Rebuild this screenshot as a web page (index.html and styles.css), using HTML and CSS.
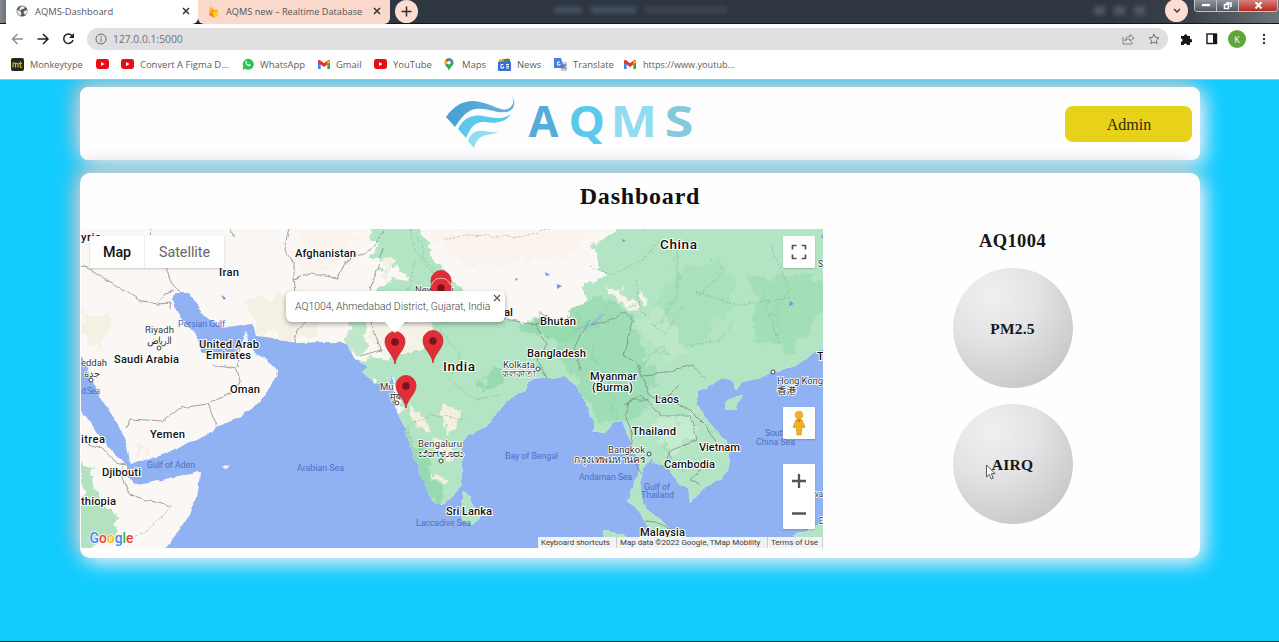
FILE: index.html
```html
<!DOCTYPE html>
<html lang="en">
<head>
<meta charset="utf-8">
<title>AQMS-Dashboard</title>
<link rel="stylesheet" href="styles.css">
</head>
<body>
<svg class="defs" width="0" height="0">
  <symbol id="yt" viewBox="0 0 13 10"><rect width="13" height="10" rx="2.4" fill="#e50d16"/><path d="M5 3v4l3.6-2z" fill="#fff"/></symbol>
  <symbol id="gm" viewBox="0 0 12 9"><path d="M0 1.2V9h2.7V3.6z" fill="#4285f4"/><path d="M12 1.2V9H9.3V3.6z" fill="#34a853"/><path d="M0 1.2C.3-.2 1.6-.1 2.4.5L6 3.3 9.6.5c.8-.6 2.1-.7 2.4.7v1.3L6 7 0 2.500z" fill="#ea3223"/><path d="M9.300 1L12 .8V2.500L9.300 4.500z" fill="#fbbc04"/></symbol>
  <symbol id="pin" viewBox="0 0 22 34"><path d="M11 33C10 24 1 19 1 10.500a10 10 0 0 1 20 0C21 19 12 24 11 33z" fill="#df2e36" stroke="#c9242d" stroke-width=".8"/><circle cx="11" cy="11" r="3.800" fill="#79141a" stroke="none"/></symbol>
  <symbol id="x" viewBox="0 0 8 8"><path d="M1 1l6 6M7 1L1 7" stroke="#333" stroke-width="1.500"/></symbol>
</svg>

<header class="tabstrip">
  <div class="tab tab-active">
    <svg width="12" height="12" viewBox="0 0 12 12"><circle cx="6" cy="6" r="5.500" fill="#55585c"/><path d="M1 5l3 1 1.500 2-1 3C2 10 1 8 1 5zM6 1l3 1-1 2-2 0-1 1.500-2-.5 1-2.500zM8 6l3-1c.5 2-.5 4-2 5L7.500 8z" fill="#e8e8e8"/></svg>
    <span class="tab-title t1">AQMS-Dashboard</span>
    <svg class="close" width="8" height="8"><use href="#x"/></svg>
  </div>
  <div class="tab tab-pink">
    <svg width="11" height="13" viewBox="0 0 11 13"><path d="M1 10L2 1l2 3 1-2 1 3 3-1 1.500 6L6 13z" fill="#fbb01c"/><path d="M1 10l4-5 2 8z" fill="#f58a13"/><path d="M4.500 7l6 0-.5 4-4 2z" fill="#fdcf3a"/></svg>
    <span class="tab-title t2">AQMS new – Realtime Database</span>
    <svg class="close" width="8" height="8"><use href="#x"/></svg>
  </div>
  <div class="round plus"><svg width="11" height="11"><path d="M5.500 .5v10M.5 5.500h10" stroke="#3b2a28" stroke-width="1.500"/></svg></div>
  <div class="ghost"><i></i><i></i><i></i></div>
  <div class="ghost-marks"><i></i><i></i><i></i></div>
  <div class="round chevron"><svg width="8" height="6"><path d="M1 1l3 3 3-3" fill="none" stroke="#43302c" stroke-width="1.300"/></svg></div>
  <div class="winbtns">
    <span><svg width="10" height="5"><rect x=".5" y=".5" width="9" height="3" fill="#fff" stroke="#555" stroke-width=".5"/></svg></span>
    <span><svg width="9" height="8"><path d="M3 1h5v4M1.500 2.500h4v4h-4z" fill="none" stroke="#fff" stroke-width="1.600"/></svg></span>
    <span class="red"><svg width="9" height="7"><path d="M1.500 0l6 6.500M7.500 0l-6 6.500" stroke="#fff" stroke-width="2"/></svg></span>
  </div>
</header>

<nav class="toolbar">
  <svg width="76" height="22" viewBox="0 0 76 22" fill="none">
    <path d="M16 11H6m4.500-5L5.500 11l5 5" stroke="#8a8a8a" stroke-width="1.300"/>
    <path d="M30.500 11h10M36 6l5 5-5 5" stroke="#222" stroke-width="1.500"/>
    <path d="M65.300 8A4.700 4.700 0 1 0 66 12" stroke="#222" stroke-width="1.500"/><path d="M67 5v5h-5z" fill="#222"/>
  </svg>
  <div class="address">
    <svg width="12" height="12" fill="none" stroke="#666"><circle cx="6" cy="6" r="5"/><path d="M6 5.300v3.500M6 3v1.300"/></svg>
    <span class="url">127.0.0.1:5000</span>
    <svg class="share" width="13" height="12" fill="none" stroke="#808083"><path d="M1 4v7h9V9M3 8c0-3 2-4.500 5-4.500V1.500L12 5 8 8.300V6C6 6 4 6.500 3 8z"/></svg>
    <svg width="12" height="12" viewBox="0 0 12 12" fill="none" stroke="#707073"><path d="M6 1l1.500 3.400 3.500.4-2.600 2.400.7 3.600L6 9l-3.100 1.800.7-3.600L1 4.800l3.500-.4z"/></svg>
  </div>
  <svg class="puzzle" width="12" height="12"><path d="M1 3h3a1.700 1.700 0 1 1 3.400 0H10v3a1.700 1.700 0 1 1 0 3.300V12H7a1.600 1.600 0 0 0-3.200 0H1V8.800a1.600 1.600 0 0 0 0-3.200z" fill="#161616"/></svg>
  <svg width="12" height="12"><rect x="1" y="1" width="9.500" height="9.500" fill="none" stroke="#161616" stroke-width="1.400"/><path d="M7 1h4v10H7z" fill="#161616"/></svg>
  <div class="avatar">K</div>
  <svg width="4" height="12" fill="#333"><circle cx="2" cy="2" r="1.200"/><circle cx="2" cy="6" r="1.200"/><circle cx="2" cy="10" r="1.200"/></svg>
</nav>

<nav class="bookmarks">
  <a class="bm b1"><svg width="13" height="13"><rect width="13" height="13" rx="2" fill="#26251f"/><path d="M2 9.500V5.500q1.300-1.500 2.500 0v4M4.500 6q1.300-1.500 2.500 0v3.500M9.300 3.500v5q.3 1 1.700 1M7.800 5.500H11" fill="none" stroke="#d8b82c" stroke-width="1.200"/></svg><span>Monkeytype</span></a>
  <a class="bm b2"><svg width="13" height="10"><use href="#yt"/></svg></a>
  <a class="bm b3"><svg width="13" height="10"><use href="#yt"/></svg><span>Convert A Figma D...</span></a>
  <a class="bm b4"><svg width="12" height="12"><path d="M.5 11.500l.8-3A5.500 5.500 0 1 1 3.500 11z" fill="#2cc64e"/><path d="M3.500 3.200q1-1 1.500.7l-.5.9q.8 1.500 2 1.800l.8-.7 1.500.8q-.3 1.900-2.200 1.500Q3.300 7 3.500 3.200z" fill="#fff"/></svg><span>WhatsApp</span></a>
  <a class="bm b5"><svg width="12" height="9"><use href="#gm"/></svg><span>Gmail</span></a>
  <a class="bm b6"><svg width="13" height="10"><use href="#yt"/></svg><span>YouTube</span></a>
  <a class="bm b7"><svg width="10" height="13" viewBox="0 0 10 13"><path d="M5 13C4.500 9.500.5 8 .5 4.800A4.500 4.500 0 0 1 9.500 4.800C9.500 8 5.500 9.500 5 13z" fill="#34a853"/><path d="M1.300 7A4.600 4.600 0 0 1 1.500 2L5 4.800z" fill="#fbbc04"/><path d="M1.500 2.200A4.500 4.500 0 0 1 4.500.3L5 4.800z" fill="#ea4335"/><path d="M4.500.3a4.500 4.500 0 0 1 4.500 2.500L5 4.800z" fill="#4285f4"/><circle cx="5" cy="4.700" r="1.700" fill="#fff"/></svg><span>Maps</span></a>
  <a class="bm b8"><svg width="13" height="13"><path d="M1 3l9-3 2 4z" fill="#e9a33a"/><path d="M4 1h8v3H4z" fill="#3d8f58"/><path d="M1 1.500h5v2H1z" fill="#e9a33a"/><rect y="3.500" width="13" height="9.500" rx="1" fill="#3c6ddb"/><path d="M5.500 6.500H3v3.500h2.500V8.500M8 6.500h3M8 8.300h3M8 10h3" stroke="#fff" fill="none"/></svg><span>News</span></a>
  <a class="bm b9"><svg width="13" height="13"><path d="M5 4h8v9H7z" fill="#c9ccd2"/><path d="M0 0h7l3 10H0z" fill="#477fe6"/><path d="M6 4H3.500v3H6V5.700" stroke="#fff" fill="none"/><path d="M8.500 7h4M10.500 6v1q0 2-2 4M9.500 8l2.500 3" stroke="#68748a" fill="none"/></svg><span>Translate</span></a>
  <a class="bm b10"><svg width="12" height="9"><use href="#gm"/></svg><span>https://www.youtub...</span></a>
</nav>

<main class="page">
  <section class="card topbar">
    <svg class="logo" width="250" height="56" viewBox="445 93 250 56">
      <defs><linearGradient id="lg" x1="0" x2="1"><stop offset="0" stop-color="#469fd4"/><stop offset="1" stop-color="#69b4dc"/></linearGradient></defs>
      <path d="M446 117C456 103 468 99 480 102 494 105 503 113 510 107.500 514 104 514 100 512 96 516 102 515 110 507 112 497 114 487 107 475 109 465 111 460 120 455 127z" fill="url(#lg)"/>
      <path d="M458 129C463 119 471 114 483 116 494 118 503 120 511 114 506 122 496 124 485 122 475 121 470 128 466 138z" fill="#5bc8ec"/>
      <path d="M468 141C471 132 477 130 485 131 491 132 495 133 499 131 494 135 488 134 483 136 478 138 475 143 474 148z" fill="#92dcf0"/>
      <g class="word"><text x="528.500" y="136.500" textLength="30" lengthAdjust="spacingAndGlyphs" fill="#55acd9">A</text><text x="568.500" y="136.500" textLength="36.500" lengthAdjust="spacingAndGlyphs" fill="#5bc8ec">Q</text><text x="610.500" y="136.500" textLength="46.500" lengthAdjust="spacingAndGlyphs" fill="#92dcf0">M</text><text x="664.500" y="136.500" textLength="29" lengthAdjust="spacingAndGlyphs" fill="#86c9d8">S</text></g>
    </svg>
    <button class="admin">Admin</button>
  </section>

  <section class="card board">
    <h1>Dashboard</h1>
    <div class="cols">
      <div class="mapbox">
        <svg class="map" width="742" height="319" viewBox="81 229 742 319">
          <defs>
            <filter id="rough" filterUnits="userSpaceOnUse" x="61" y="209" width="790" height="360"><feTurbulence type="fractalNoise" baseFrequency=".1" numOctaves="2" seed="4"/><feDisplacementMap in="SourceGraphic" scale="5" xChannelSelector="R" yChannelSelector="G"/><feGaussianBlur stdDeviation=".35"/></filter>
            <filter id="rough2" filterUnits="userSpaceOnUse" x="61" y="209" width="790" height="360"><feTurbulence type="fractalNoise" baseFrequency=".06" numOctaves="4" seed="9"/><feDisplacementMap in="SourceGraphic" scale="24" xChannelSelector="R" yChannelSelector="G"/><feGaussianBlur stdDeviation=".5"/></filter>
            <path id="land" d="M70 219H835V340L812 355 795 366 775 372 762 378 742 382 736 390 731 380 722 378 708 387 698 392 697 403 703 415 715 428 725 440 730 452 729 468 720 480 707 485 690 502 688 488 678 483 672 473 665 465 653 463 652 458 645 467 640 482 642 498 647 510 658 517 668 527 675 538 680 550 658 550 653 532 643 518 635 508 628 503 630 492 637 478 640 465 635 452 628 435 623 422 615 422 605 433 593 433 593 422 588 408 582 395 575 385 565 377 553 378 540 378 528 382 525 390 512 397 502 408 485 427 468 435 463 442 463 468 460 487 452 497 442 506 433 502 425 485 417 465 410 445 405 428 397 412 395 398 393 378 397 370 387 385 375 383 362 372 368 367 355 358 345 343 325 342 297 343 267 338 255 337 252 323 240 325 223 328 210 320 198 308 190 293 175 293 172 298 180 317 190 328 197 338 202 352 213 358 227 358 240 348 247 330 248 343 257 355 272 363 278 370 277 378 268 390 260 403 240 417 217 427 208 435 190 443 167 453 147 460 130 463 128 450 123 435 113 415 100 398 93 380 86 366 81 356 70 350zM70 402L82 411 90 422 100 437 113 452 127 465 127 475 135 485 150 483 173 477 195 472 200 472 198 492 190 515 177 533 163 552H70zM463 492L470 497 477 510 480 518 472 525 462 520 461 505zM743 395L735 410 725 410 725 402 733 397zM783 540L802 532 818 526 835 510V560H785zM602 530L625 535 630 560H612zM221 464L230 465 226 468z"/>
            <clipPath id="lc"><use href="#land"/></clipPath>
          </defs>
          <rect x="70" y="219" width="760" height="340" fill="#90b2f3"/>
          <g filter="url(#rough)">
            <use href="#land" fill="#faf7f4"/>
            <g clip-path="url(#lc)">
              <g filter="url(#rough2)">
                <path d="M392 215H412L430 250 446 272 475 298 515 322 555 320 590 318 585 285 600 275 592 250 625 222H850V580H590V480L460 550H420L397 415 393 380 380 391 358 376 356 360 380 358 392 362 412 345 400 330 375 312 378 290 405 272 375 262 370 232z" fill="#b3e5c4"/>
                <path d="M352 300L363 318 368 348 350 352 348 325z" fill="#bfe8cb"/>
                <path d="M568 318L600 296 635 312 640 350 660 380 640 420 600 425 575 375 550 350z" fill="#9fddb6"/>
                <path d="M655 300L680 270 720 262 740 280 725 310 700 340 670 350z" fill="#a8e1bb"/>
                <path d="M750 280L810 270 830 300 790 350 760 345z" fill="#a2deb6"/>
                <path d="M650 420L690 415 700 440 670 450 655 448z" fill="#c5eccf"/>
                <path d="M640 270L660 300 640 330 665 365 690 355 670 320z" fill="#bde8c8"/>
                <path d="M402 425L410 430 440 495 436 505 415 470zM480 375L495 365 508 380 488 395zM510 322L560 325 590 315 600 328 550 340z" fill="#98dab0"/>
                <path d="M81 462L97 468 98 495 110 510 120 520 118 532 100 540 75 540zM77 535L95 530 93 550 78 550z" fill="#b2e2bf"/>
                <path d="M405 405L418 412 432 428 424 434 408 420zM445 412L457 410 455 430 442 433zM435 445L450 440 452 460 440 465zM430 475L445 480 440 485zM385 400L390 390 405 395 402 402zM380 270L392 262 390 285z" fill="#f4f0df"/>
                <path d="M370 310H390L440 335 425 350 405 350 385 362 372 345z" fill="#f7f2e8"/>
                <path d="M242 300L290 295 320 310 315 340 260 335zM82 310L110 320 105 350 85 345zM135 445L150 450 140 460z" fill="#f5f0e4"/>
                <path d="M605 285L625 290 640 308 620 302zM640 290L648 300 642 303z" fill="#f5f3ea"/>
              </g>
              <g fill="#fbeae2" opacity=".35" filter="url(#rough2)"><path d="M430 232H590L560 260 460 265zM300 232H360L340 260 300 275z"/></g>
              <g fill="none" stroke="#8cd1a5" stroke-width="2.500" opacity=".45" filter="url(#rough2)"><path d="M415 240L440 285M590 320L630 300M670 250L680 290 660 320M760 290L780 330M620 420L590 340M700 400L720 435M660 440L680 470M640 360L670 350"/></g>
            </g>
            <g fill="none" stroke="#77827d" stroke-width=".9" opacity=".8">
              <path d="M81 266L92 270 142 302 158 304 165 293 174 290M158 304L170 303 172 309M152 229L150 235M165 265L170 280 180 292M230 229L235 236M289 229L284 250 293 262 293 280 296 298 287 310 310 318 297 330 295 343M213 365L237 369 240 381 235 391 208 404 180 408 163 421 130 419 126 429M208 404L217 426M240 347L238 368M293 280L310 274 338 278 345 262 370 250 383 232M383 248L378 270 370 290 378 303 372 325 381 350 360 356M81 443L100 447 118 464 127 465M123 466L122 478 130 495 171 507M450 290L475 305 510 320 540 325 540 312 555 322M590 320L575 345 580 370M625 312L605 322 590 325M535 325L548 345 537 360 546 378M625 312L633 322 623 355 637 363 642 375 665 373 680 368 692 365 705 377M625 405L640 395 652 405 660 415 690 415 697 440 672 450 665 460M665 400L690 410 705 425 715 442M642 375L650 395 665 400 678 385M645 400L630 400 625 415 633 435 630 455 642 475M670 452L672 460M700 470L690 480 700 485M645 520L660 525 672 530"/>
              <path d="M171 507L145 533 125 540M410 229L415 250 430 270 455 290M445 240L465 235 520 237 550 229M590 266L612 275 640 262 660 240M415 260L410 285 400 310M455 300L440 330 460 355 450 380 475 400 500 395M400 430L430 415 465 420M635 280L640 310 665 335 680 310 690 300M700 295L725 270 710 260M695 290L720 300 740 305 790 298M770 245L790 290 770 315 780 345M690 345L720 340 735 320" stroke="#7ba18c" stroke-width=".75" stroke-dasharray="2.500 1.500" opacity=".8"/>
            </g>
          </g>
          <g fill="#6b98ef"><path d="M221 295l5 3-2 2zM545 272l5 3-4 1zM557 284l5 2-5 3zM622 239l4 2-3 1zM790 301l4 3-5 2zM821 236l4-2v8zM515 278l3 1-2 2z"/></g>
          <path d="M574 330L590 325 604 314" fill="none" stroke="#8ab4e6" stroke-width="1.200"/>
          <g class="country">
            <text x="81" y="241" textLength="20">yria</text><text x="219" y="276" textLength="20">Iran</text><text x="295" y="257" textLength="61">Afghanistan</text><text class="big" x="660" y="248.500" textLength="37">China</text>
            <text x="114" y="363" textLength="65">Saudi Arabia</text><text x="199" y="348" textLength="60">United Arab</text><text x="206" y="359" textLength="45">Emirates</text><text x="230" y="393" textLength="30">Oman</text><text x="150" y="438" textLength="35">Yemen</text><text x="102" y="476" textLength="39">Djibouti</text><text x="81" y="505" textLength="35">thiopia</text><text x="81" y="443" textLength="24">itrea</text>
            <text class="big" x="443" y="371" textLength="32">India</text><text x="504" y="316">al</text><text x="540" y="325" textLength="36">Bhutan</text><text x="527" y="357" textLength="59">Bangladesh</text><text x="590" y="380" textLength="47">Myanmar</text><text x="592" y="391" textLength="41">(Burma)</text><text x="655" y="403" textLength="24">Laos</text><text x="632" y="435" textLength="44">Thailand</text><text x="699" y="451" textLength="41">Vietnam</text><text x="664" y="468" textLength="51">Cambodia</text><text x="640" y="536" textLength="45">Malaysia</text><text x="446" y="515" textLength="46">Sri Lanka</text><text x="817" y="360">T</text>
          </g>
          <g class="city">
            <text x="145" y="333" textLength="29">Riyadh</text><text x="147" y="344" textLength="25">الرياض</text><text x="81" y="366" textLength="26">eddah</text><text x="84" y="377" textLength="16">جدة</text><text x="415" y="293">New</text><text x="446" y="293">hi</text><text x="503" y="368" textLength="32">Kolkata</text><text x="502" y="377" textLength="34" lengthAdjust="spacingAndGlyphs">কলকাতা</text><text x="380" y="390">Mu</text><text x="390" y="400">मुंब</text><text x="418" y="447" textLength="44">Bengaluru</text><text x="418" y="457" textLength="46" lengthAdjust="spacingAndGlyphs">ಬೆಂಗಳೂರು</text><text x="608" y="453" textLength="37">Bangkok</text><text x="574" y="463" textLength="71" lengthAdjust="spacingAndGlyphs">กรุงเทพมหานคร</text><text x="777" y="384" textLength="46">Hong Kong</text><text x="777" y="394" textLength="19">香港</text><text x="815" y="497" textLength="8" lengthAdjust="spacingAndGlyphs">va</text><text x="818" y="267" textLength="5" lengthAdjust="spacingAndGlyphs">S</text><text x="819" y="524" textLength="4" lengthAdjust="spacingAndGlyphs">E</text>
          </g>
          <g fill="#fff" stroke="#444"><circle cx="159" cy="348" r="2"/><circle cx="91" cy="380" r="2"/><circle cx="538" cy="369" r="2"/><circle cx="441" cy="461" r="2"/><circle cx="649" cy="454" r="2"/><circle cx="773" cy="372" r="2"/><circle cx="397" cy="403" r="2"/></g>
          <g class="sea">
            <text x="178" y="327" textLength="47">Persian Gulf</text><text x="81" y="394" textLength="19">d Sea</text><text x="147" y="468" textLength="48">Gulf of Aden</text><text x="297" y="471" textLength="47">Arabian Sea</text><text x="505" y="459" textLength="53">Bay of Bengal</text><text x="416" y="526" textLength="55">Laccadive Sea</text><text x="579" y="480" textLength="53">Andaman Sea</text><text x="644" y="490" textLength="26">Gulf of</text><text x="641" y="498" textLength="33">Thailand</text><text x="765" y="436" textLength="22">South</text><text x="756" y="445" textLength="39">China Sea</text>
          </g>
          <use href="#pin" x="430" y="270" width="22" height="34"/><use href="#pin" x="430" y="277" width="22" height="34"/><path d="M431.500 285a10 10 0 0 1 19 0" fill="none" stroke="#f4bcbc"/>
          <use href="#pin" x="384" y="331" width="22" height="34"/><use href="#pin" x="422" y="330" width="22" height="34"/><use href="#pin" x="395" y="375" width="22" height="34"/>
          <text class="google" x="89.500" y="543" textLength="44" lengthAdjust="spacingAndGlyphs"><tspan fill="#4285f4">G</tspan><tspan fill="#ea4335">o</tspan><tspan fill="#fbbc04">o</tspan><tspan fill="#4285f4">g</tspan><tspan fill="#34a853">l</tspan><tspan fill="#ea4335">e</tspan></text>
        </svg>
        <div class="maptype"><span class="on">Map</span><span>Satellite</span></div>
        <div class="ctl full"><svg width="16" height="16"><path d="M1.500 5.500v-4h4M10.500 1.500h4v4M14.500 10.500v4h-4M5.500 14.500h-4v-4" fill="none" stroke="#555" stroke-width="1.700"/></svg></div>
        <div class="ctl peg"><svg width="16" height="26" viewBox="0 0 16 26"><path d="M5 10q3-2 6 0l3 7-1.500 1-1.500-2-1 9H6l-1-9-1.500 2L2 17z" fill="#f5b324" stroke="#cf8f16" stroke-width=".7"/><circle cx="8" cy="5" r="3.800" fill="#f5b324" stroke="#d6981c" stroke-width=".7"/><path d="M5.500 10l2.500 3 2.500-3z" fill="#c98a1b"/></svg></div>
        <div class="ctl zoom"><svg width="14" height="64"><path d="M0 16h14M7 9v14M0 48.500h14" stroke="#555" stroke-width="2.300"/></svg></div>
        <div class="info">AQ1004, Ahmedabad District, Gujarat, India<svg width="8" height="8"><path d="M1 1l6 6M7 1L1 7" stroke="#555" stroke-width="1.100"/></svg></div>
        <div class="legal"><span class="k1">Keyboard shortcuts</span><span class="k2">Map data ©2022 Google, TMap Mobility</span><span class="k3">Terms of Use</span></div>
      </div>
      <aside class="readings">
        <h2>AQ1004</h2>
        <div class="ball">PM2.5</div>
        <div class="ball">AIRQ<svg class="cursor" width="11" height="17"><path d="M1.500 1v12l2.800-2.600 2 4.600 2-.9-2-4.500H10z" fill="#fff" stroke="#444" stroke-width=".9"/></svg></div>
      </aside>
    </div>
  </section>
</main>
</body>
</html>
```
FILE: styles.css
```css
* { box-sizing: border-box; }
body { margin: 0; width: 1279px; height: 642px; overflow: hidden; display: flex; flex-direction: column; background: #12cbff; font-family: "Open Sans", "Noto Sans", sans-serif; }
svg { flex: none; display: block; }
.defs { position: absolute; }

.tabstrip { height: 24px; flex: none; display: flex; align-items: flex-start; background: linear-gradient(90deg, #85898f 0, #6d7178 6px, #2e3642 200px, #2e3642 1100px, #3a414a 1190px, #6e7378 1279px); border-bottom: 1px solid #14171b; }
.tab { display: flex; align-items: center; height: 24px; color: #55565a; }
.tab-active { width: 192px; margin-left: 6px; padding: 0 8px 2px 10px; background: #fff; border-radius: 0 0 6px 0; }
.tab-pink { width: 192px; padding: 0 9px 2px 10px; background: #fbd8cc; border-radius: 0 0 6px 6px; }
.tab-title { white-space: nowrap; margin-left: 7px; }
.t1 { font-size: 9.400px; }
.t2 { font-size: 9.200px; }
.close { margin-left: auto; }
.round { width: 23px; height: 23px; border-radius: 50%; background: #fbddd2; display: flex; align-items: center; justify-content: center; }
.plus { margin-left: 5px; }
.ghost { display: flex; gap: 9px; margin: 7px 0 0 136px; width: 540px; filter: blur(2px); }
.ghost i { height: 6px; width: 28px; background: #465564; }
.ghost i:nth-child(2) { width: 45px; }
.ghost i:nth-child(3) { width: 82px; background: #3d4854; }
.ghost-marks { display: flex; gap: 9px; margin-top: 6px; width: 71px; filter: blur(2px); }
.ghost-marks i { width: 11px; height: 9px; background: #4d5864; }
.chevron { margin-top: -1px; }
.winbtns { display: flex; margin-left: 6px; height: 12px; border: 1px solid #c0c3c7; border-top: 0; border-radius: 0 0 4px 4px; overflow: hidden; }
.winbtns span { width: 22px; display: flex; justify-content: center; align-items: center; background: linear-gradient(#92969c, #51565d); border-right: 1px solid #c0c3c7; }
.winbtns .red { width: 38px; background: linear-gradient(#d7837b, #b8281f); border: 0; }

.toolbar { height: 30px; flex: none; display: flex; align-items: center; padding-left: 7px; background: #fff; }
.address { width: 1081px; height: 22px; margin-left: 4px; padding: 0 8px; border-radius: 11px; background: #e1dfe2; display: flex; align-items: center; }
.url { margin-left: 6px; font-size: 10.300px; color: #707073; }
.share { margin-left: auto; margin-right: 13px; }
.puzzle { margin: 0 14px 0 12px; }
.avatar { width: 18px; height: 18px; margin: 0 16px 0 10px; border-radius: 50%; background: #5ea638; color: #fff; font-size: 9px; display: flex; align-items: center; justify-content: center; }

.bookmarks { height: 26px; flex: none; display: flex; padding: 0 0 5px 11px; background: #fff; border-bottom: 1px solid #9fc3cf; }
.bm { display: flex; align-items: center; font-size: 9.450px; color: #5c5d61; white-space: nowrap; }
.bm span { margin-left: 6px; }
.b1 { width: 85px; } .b2 { width: 25px; } .b3 { width: 121px; } .b4 { width: 76px; } .b5 { width: 56px; }
.b6 { width: 70px; } .b7 { width: 54px; } .b8 { width: 56px; } .b9 { width: 70px; }
.b1 span { font-size: 9.200px; }
.b7 span { margin-left: 8px; }
.b10 span { margin-left: 7px; font-size: 9.100px; }

.page { flex: 1; padding: 7px 79px 0 80px; display: flex; flex-direction: column; gap: 13px; overflow: hidden; border-bottom: 1px solid #122733; }
.card { background: #fefdff; box-shadow: 5px 5px 20px #eef5fa, -5px -5px 20px #b4b9bd; }
.topbar { height: 73px; flex: none; border-radius: 8px; padding: 6px 8px 0 365px; display: flex; justify-content: space-between; }
.word { font: 700 43.500px "Open Sans", sans-serif; }
.admin { width: 127px; height: 36px; margin-top: 13px; padding: 2px 0 0 1px; border: 0; border-radius: 8px; background: #e7d219; color: #30290a; font: 16px "Liberation Serif", serif; }
.board { height: 385px; flex: none; border-radius: 10px; padding-top: 8px; }
.board h1 { margin: 0; height: 48px; text-align: center; font: 700 24px/31px "Liberation Serif", serif; letter-spacing: .8px; color: #111; }
.cols { display: flex; }
.mapbox { position: relative; width: 743px; height: 319px; padding-left: 1px; font-family: Roboto, sans-serif; }
.country { font: 500 11.200px Roboto, sans-serif; fill: #111; stroke: #fff; stroke-width: 2px; paint-order: stroke; }
.country .big { font-size: 13.500px; }
.city { font: 9.500px Roboto, "Noto Sans", "Noto Sans CJK SC", sans-serif; fill: #333; stroke: #fff; stroke-width: 1.500px; paint-order: stroke; }
.sea { font: 8.800px Roboto, sans-serif; fill: #4a70c6; }
.google { font: 500 15px Roboto, sans-serif; stroke: #fff; stroke-width: 1.500px; paint-order: stroke; }
.maptype { position: absolute; left: 10px; top: 7px; width: 134px; height: 32px; display: flex; align-items: center; background: #fff; color: #666; font-size: 14.300px; box-shadow: 0 1px 2px #0003; }
.maptype span { width: 79px; text-align: center; line-height: 32px; }
.maptype .on { width: 55px; color: #111; font-weight: 500; border-right: 1px solid #eee; }
.ctl { position: absolute; left: 703px; width: 32px; height: 32px; display: flex; align-items: center; justify-content: center; background: #fff; border-radius: 1px; box-shadow: 0 1px 2px #0003; }
.full { top: 7px; }
.peg { top: 178px; }
.zoom { top: 235px; height: 65px; }
.info { position: absolute; left: 206px; top: 62px; width: 219px; height: 31px; padding-left: 9px; line-height: 32px; border-radius: 6px; background: #fff; color: #444; font-size: 10.400px; font-weight: 300; white-space: nowrap; box-shadow: 0 2px 5px #0005; }
.info::after { content: ""; position: absolute; left: 99px; top: 31px; border: 10px solid transparent; border-top: 11px solid #fff; border-bottom: 0; }
.info svg { position: absolute; right: 4px; top: 3px; }
.legal { position: absolute; left: 458px; bottom: 0; width: 285px; height: 11px; line-height: 11px; display: flex; background: #f1f2f4; color: #3b3b3d; font-size: 7.950px; white-space: nowrap; }
.legal span { padding-left: 3px; border-right: 1px solid #ccc; }
.k1 { width: 79px; } .k2 { width: 151px; } .k3 { width: 55px; }
.readings { width: 380px; padding-left: 2px; display: flex; flex-direction: column; align-items: center; gap: 16px; font-family: "Liberation Serif", serif; color: #161616; }
.readings h2 { margin: 0; height: 23px; font-size: 18.500px; line-height: 24px; letter-spacing: .4px; }
.ball { position: relative; flex: none; width: 120px; height: 120px; padding-top: 1px; border-radius: 50%; display: flex; align-items: center; justify-content: center; font-size: 15.500px; font-weight: 700; letter-spacing: .2px; background: radial-gradient(circle at 32% 22%, #f1f0f1 0, #e3e2e4 38%, #cac9cc 78%, #bdbcbf 100%); }
.cursor { position: absolute; left: 32px; top: 60px; }
```
